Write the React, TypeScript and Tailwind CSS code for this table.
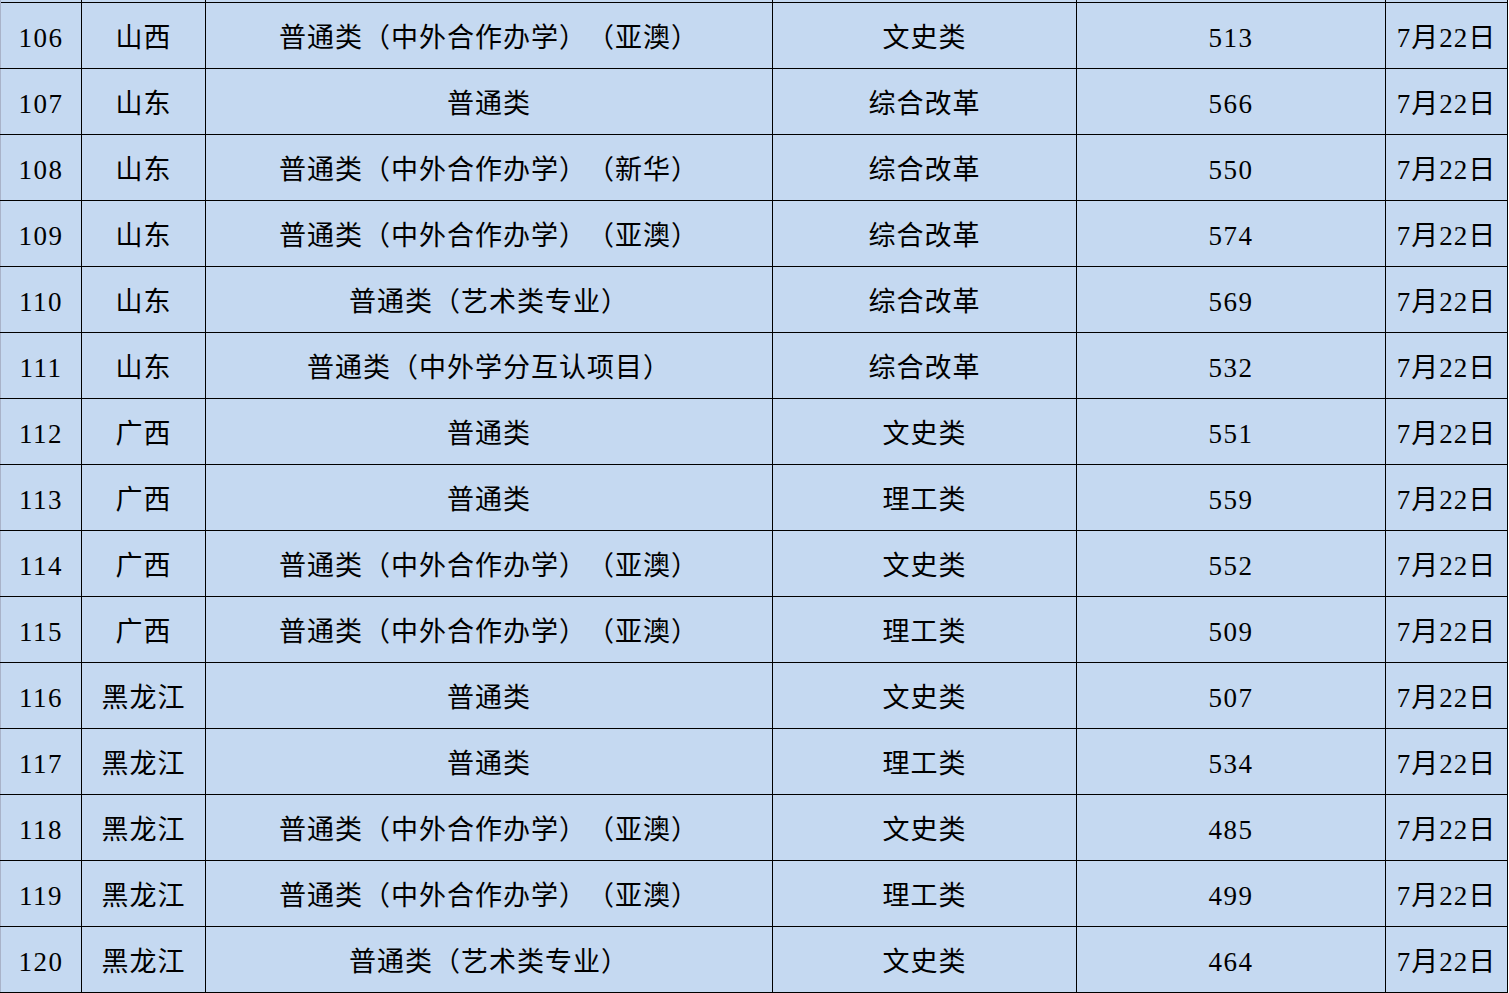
const ROWS: [string, string, string, string, string][] = [
  ['106', '山西', '普通类（中外合作办学）（亚澳）', '文史类', '513'],
  ['107', '山东', '普通类', '综合改革', '566'],
  ['108', '山东', '普通类（中外合作办学）（新华）', '综合改革', '550'],
  ['109', '山东', '普通类（中外合作办学）（亚澳）', '综合改革', '574'],
  ['110', '山东', '普通类（艺术类专业）', '综合改革', '569'],
  ['111', '山东', '普通类（中外学分互认项目）', '综合改革', '532'],
  ['112', '广西', '普通类', '文史类', '551'],
  ['113', '广西', '普通类', '理工类', '559'],
  ['114', '广西', '普通类（中外合作办学）（亚澳）', '文史类', '552'],
  ['115', '广西', '普通类（中外合作办学）（亚澳）', '理工类', '509'],
  ['116', '黑龙江', '普通类', '文史类', '507'],
  ['117', '黑龙江', '普通类', '理工类', '534'],
  ['118', '黑龙江', '普通类（中外合作办学）（亚澳）', '文史类', '485'],
  ['119', '黑龙江', '普通类（中外合作办学）（亚澳）', '理工类', '499'],
  ['120', '黑龙江', '普通类（艺术类专业）', '文史类', '464'],
];

const cell = 'flex items-center justify-center pt-[5px] border-r border-black';

function Row({ cols, strip }: { cols?: string[]; strip?: boolean }) {
  const h = strip ? 'h-[3px]' : 'h-[66px]';
  return (
    <div className={`flex ${h} border-b border-black`}>
      <div className={`${cell} w-[82px] border-l border-l-[#a9b3c9] tracking-[1.5px]`}>{cols?.[0]}</div>
      <div className={`${cell} w-[124px]`}>{cols?.[1]}</div>
      <div className={`${cell} w-[567px]`}>{cols?.[2]}</div>
      <div className={`${cell} w-[304px]`}>{cols?.[3]}</div>
      <div className={`${cell} w-[309px] tracking-[1.5px]`}>{cols?.[4]}</div>
      <div className={`${cell} w-[122px]`}>{cols?.[5]}</div>
    </div>
  );
}

export default function App() {
  return (
    <div className="w-[1509px] h-[993px] overflow-hidden bg-white">
      <div
        className="w-[1508px] bg-[#c5d9f1] text-black text-[27px] leading-none whitespace-nowrap tracking-[1px] [text-spacing-trim:space-all] [font-feature-settings:'halt'_0]"
        style={{ fontFamily: '"Liberation Serif", "Noto Sans CJK SC", serif' }}
      >
        <Row strip />
        {ROWS.map((r) => (
          <Row key={r[0]} cols={[...r, '7月22日']} />
        ))}
      </div>
    </div>
  );
}
